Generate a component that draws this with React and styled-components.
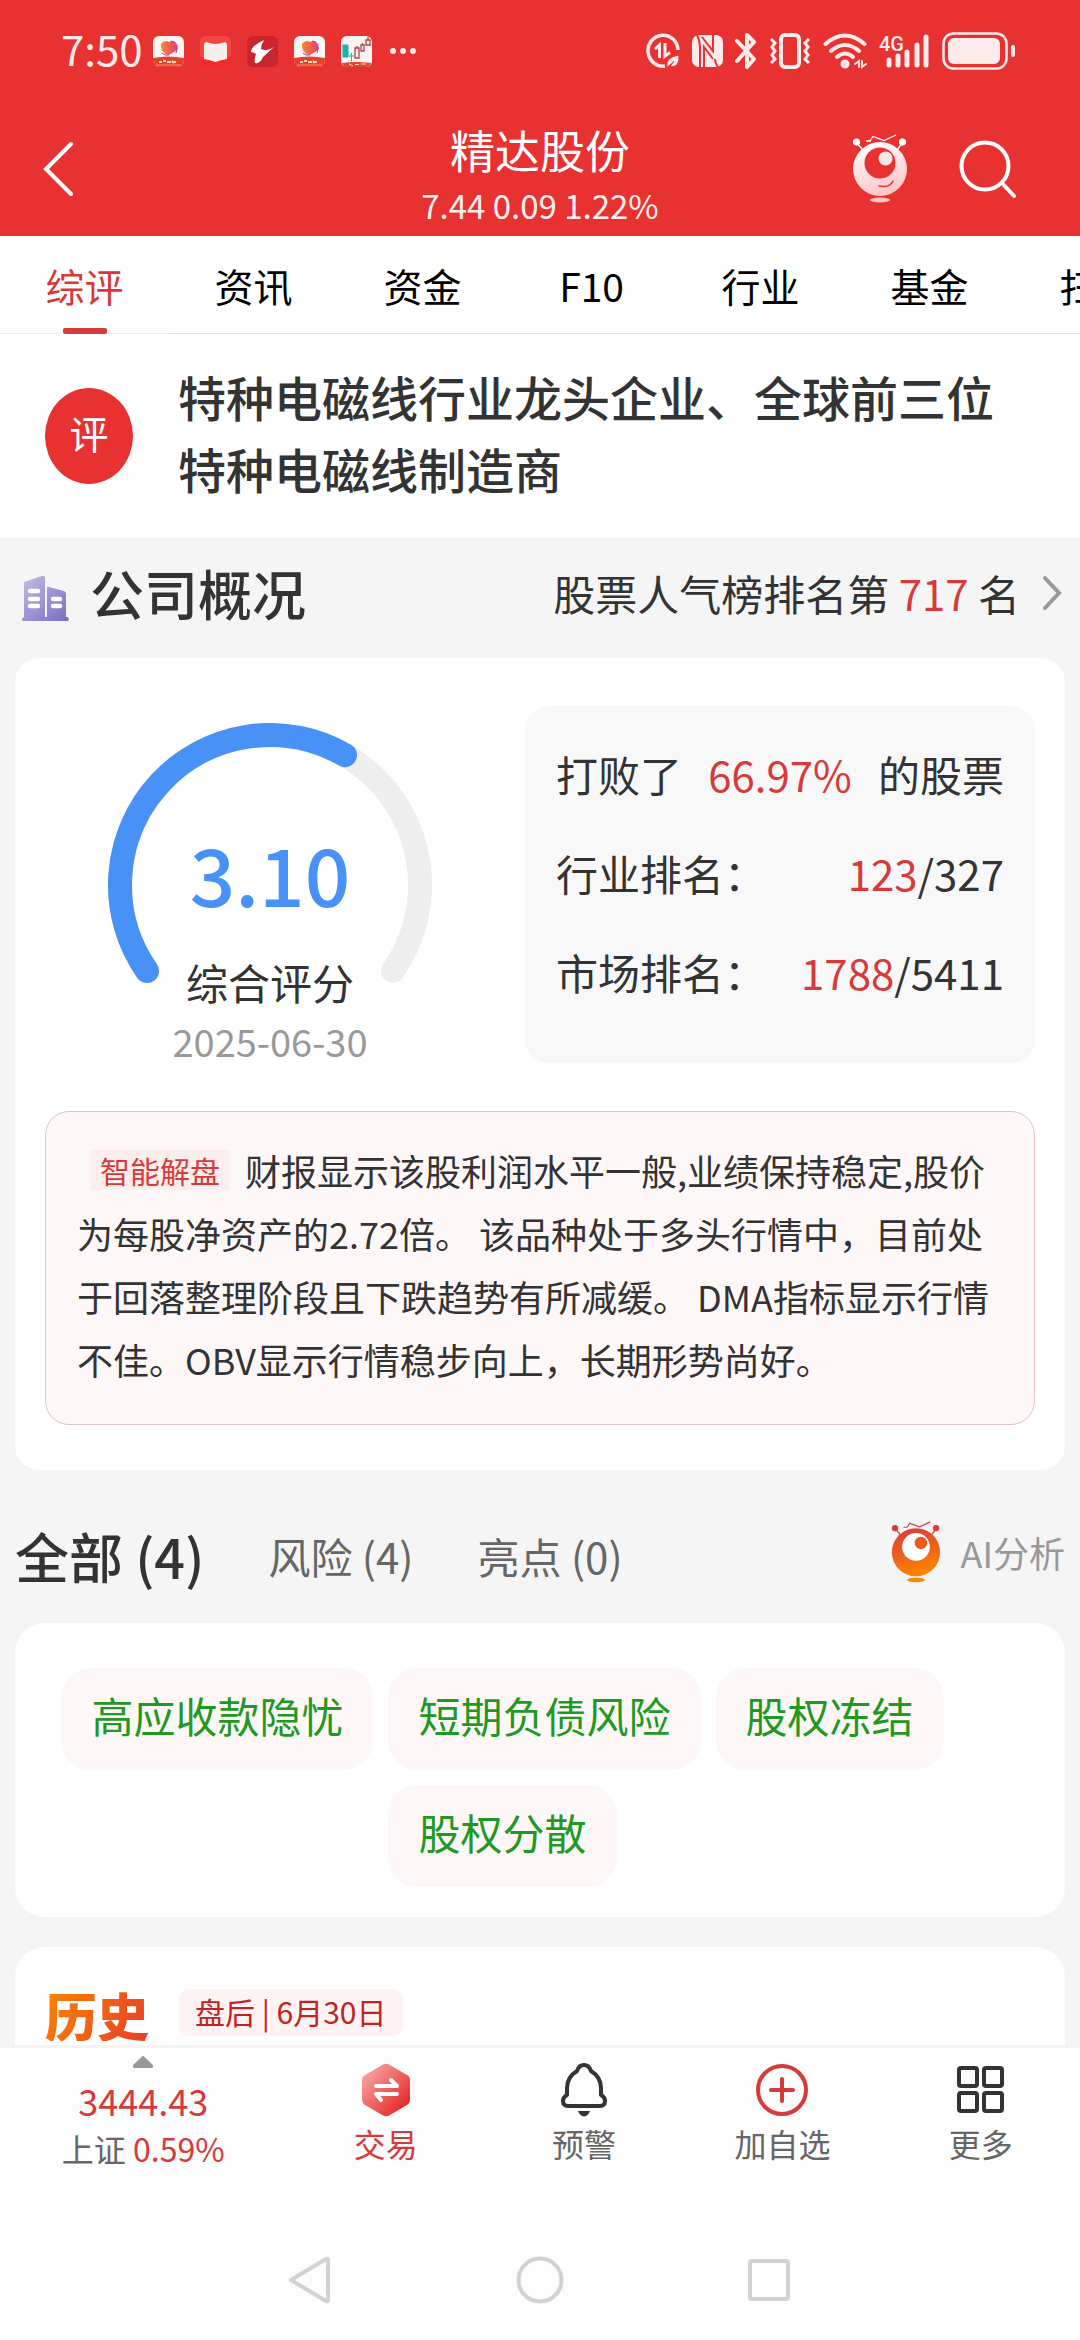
import styled, { createGlobalStyle } from "styled-components";

const RED = "#e83131";

const GlobalStyle = createGlobalStyle`
    *{
        box-sizing: border-box;
    }
    body{
        margin: 0;
        background: #fdfdfd;
        color: #333;
        font-family: "Noto Sans CJK SC", "Noto Sans", sans-serif;
    }
    button{
        border: 0;
        padding: 0;
        background: none;
        color: inherit;
        font: inherit;
        cursor: pointer;
    }
    a{
        color: inherit;
        text-decoration: none;
    }
    h1, h2, p, dl, dt, dd{
        margin: 0;
        font-weight: 400;
    }
    svg{
        display: block;
        flex: none;
    }
`

const Screen = styled.div`
    display: flex;
    flex-direction: column;
    height: 100vh;
`

const Header = styled.header`
    flex: none;
    background: ${RED};
    color: #fff;
`

const StatusBar = styled.div`
    display: flex;
    align-items: center;
    justify-content: space-between;
    height: 102px;
    padding: 0 65px 0 61px;
`

const StatusGroup = styled.div`
    display: flex;
    align-items: center;
    gap: ${(props) => props.$gap}px;
`

const Clock = styled.span`
    margin-right: -6px;
    padding-bottom: 6px;
    font-size: 42px;
    line-height: 60px;
    color: #fdeaea;
`

const TitleBar = styled.div`
    display: grid;
    grid-template-columns: 1fr auto 1fr;
    align-items: center;
    padding: 0 43px;
`

const Titles = styled.div`
    padding: 17px 0 7px;
    text-align: center;
`

const StockName = styled.h1`
    font-size: 45px;
    line-height: 62px;
`

const StockQuote = styled.p`
    font-size: 33px;
    line-height: 48px;
    color: #fff0f0;
`

const TitleActions = styled.div`
    display: flex;
    justify-content: flex-end;
    align-items: center;
    gap: 51px;
    padding-right: 20px;
`

const Tabs = styled.nav`
    display: flex;
    flex: none;
    overflow: hidden;
    background: #fff;
`

const Tab = styled.a`
    position: relative;
    flex: 0 0 15.65%;
    height: 98px;
    border-bottom: 1px solid ${(props) => (props.$active ? "#eee" : "#ddd")};
    font-size: 39px;
    line-height: 98px;
    text-align: center;
    color: ${(props) => (props.$active ? "#d63a3a" : "#000")};

    &::after{
        content: "";
        display: ${(props) => (props.$active ? "block" : "none")};
        position: absolute;
        left: 50%;
        bottom: -1px;
        width: 44px;
        height: 6px;
        margin-left: -22px;
        border-radius: 2px;
        background: #d63a3a;
    }
`

const Content = styled.main`
    flex: 1;
    min-height: 0;
    overflow-y: auto;
    scrollbar-width: none;
    background: #f5f5f5;
`

const Intro = styled.section`
    display: flex;
    align-items: center;
    gap: 45px;
    padding: 0 45px;
    background: #fff;
`

const IntroBadge = styled.span`
    flex: none;
    width: 88px;
    height: 96px;
    border-radius: 50%;
    background: ${RED};
    color: #fff;
    font-size: 39px;
    line-height: 88px;
    text-align: center;
`

const IntroText = styled.p`
    padding: 26px 0 34px;
    font-size: 48px;
    font-weight: 500;
    line-height: 72px;
`

const SectionHead = styled.div`
    display: flex;
    align-items: center;
    padding: 21px 18px 31px 21px;
`

const SectionTitle = styled.h2`
    flex: 1;
    margin-left: 19px;
    font-size: 54px;
    font-weight: 500;
    line-height: 68px;
`

const RankLink = styled.a`
    display: flex;
    align-items: center;
    gap: 22px;
    font-size: 42px;
    line-height: 68px;
`

const Up = styled.span`
    color: #d63a3a;
`

const Card = styled.section`
    margin: 0 15px 30px;
    border-radius: ${(props) => props.$radius || 30}px;
    background: #fff;
`

const OverviewCard = styled(Card)`
    padding: 48px 30px 45px 0;
    margin-bottom: 0;
`

const Overview = styled.div`
    display: grid;
    grid-template-columns: 1fr 1fr;
`

const Gauge = styled.div`
    display: grid;
    justify-items: center;
    align-items: start;
    padding-top: 17px;

    > *{
        grid-area: 1 / 1;
    }
`

const ScoreText = styled.div`
    padding-top: 102px;
    text-align: center;
`

const Score = styled.p`
    font-size: 80px;
    font-weight: 500;
    line-height: 94px;
    color: #4891f6;
`

const ScoreLabel = styled.p`
    margin-top: 33px;
    font-size: 42px;
    line-height: 60px;
`

const ScoreDate = styled.p`
    margin-top: 7px;
    font-size: 38px;
    line-height: 44px;
    color: #999;
`

const RankPanel = styled.dl`
    padding: 18px 31px 42px;
    border-radius: 24px;
    background: #f8f8f8;
    font-size: 42px;
    line-height: 99px;
`

const RankRow = styled.div`
    display: flex;
    justify-content: space-between;
`

const Analysis = styled.p`
    margin: 48px 0 0 30px;
    padding: 27px 31px 33px;
    border: 1px solid #e3c3c3;
    border-radius: 24px;
    background: #fdf7f7;
    font-size: 36px;
    line-height: 63px;
`

const AnalysisTag = styled.span`
    display: inline-block;
    margin: 0 16px 0 14px;
    padding: 0 9px;
    background: #fdeeee;
    color: #d63a3a;
    font-size: 30px;
    line-height: 40px;
    vertical-align: 3px;
`

const FilterBar = styled.div`
    display: flex;
    align-items: center;
    gap: 64px;
    padding: 48px 15px 29px;
`

const Filter = styled.button`
    font-size: ${(props) => (props.$active ? 54 : 42)}px;
    font-weight: ${(props) => (props.$active ? 500 : 400)};
    line-height: 76px;
    color: ${(props) => (props.$active ? "#333" : "#666")};
`

const AiLink = styled.a`
    display: flex;
    align-items: center;
    gap: 20px;
    margin-left: auto;
    padding-bottom: 8px;
    font-size: 36px;
    line-height: 60px;
    color: #999;
`

const TagCard = styled(Card)`
    display: flex;
    flex-wrap: wrap;
    justify-content: center;
    gap: 15px;
    padding: 45px 75px 30px 0;
`

const RiskTag = styled.button`
    padding: 0 30px 8px;
    border-radius: 30px;
    background: #fdf7f7;
    color: #1f991f;
    font-size: 42px;
    line-height: 94px;
`

const HistoryCard = styled(Card)`
    display: flex;
    align-items: flex-start;
    gap: 30px;
    padding: 42px 30px 60px;
`

const HistoryTitle = styled.h2`
    background: linear-gradient(120deg, #fb8503, #e73c28);
    background-clip: text;
    color: transparent;
    font-size: 52px;
    font-weight: 900;
    line-height: 52px;
`

const HistoryTag = styled.span`
    padding: 0 16px 3px;
    border-radius: 10px;
    background: #fff3f3;
    color: #c32222;
    font-size: 30px;
    line-height: 44px;
`

const BottomBar = styled.footer`
    display: grid;
    grid-template-columns: 13fr 9fr 9fr 9fr 9fr;
    flex: none;
    border-top: 3px solid #f4f4f4;
    padding: 8px 0 84px;
    background: #fdfdfd;
`

const IndexQuote = styled.button`
    display: flex;
    flex-direction: column;
    align-items: center;
    font-size: 32px;
    line-height: 48px;
    color: #666;
`

const IndexValue = styled.span`
    margin-top: 8px;
    font-size: 36px;
    color: #d63a3a;
`

const Action = styled.button`
    display: flex;
    flex-direction: column;
    align-items: center;
    padding-top: 7px;
    gap: 2px;
    font-size: 32px;
    line-height: 48px;
    color: ${(props) => (props.$active ? "#d63a3a" : "#666")};
`

const SystemNav = styled.nav`
    display: flex;
    flex: none;
    justify-content: center;
    gap: 181px;
    padding: 0 0 36px;
    background: #fdfdfd;
`

const tabs = ["综评", "资讯", "资金", "F10", "行业", "基金", "扫雷"];
const tags = ["高应收款隐忧", "短期负债风险", "股权冻结", "股权分散"];
const filters = ["全部 (4)", "风险 (4)", "亮点 (0)"];
const actions = [
    { label: "交易", Icon: TradeIcon },
    { label: "预警", Icon: BellIcon },
    { label: "加自选", Icon: AddIcon },
    { label: "更多", Icon: GridIcon },
];

export default function App(){
    return (
        <Screen>
            <GlobalStyle />
            <Header>
                <PhoneStatus />
                <TitleBar>
                    <button aria-label="返回">
                        <svg width="32" height="56" viewBox="0 0 32 56" fill="none" stroke="#fff" strokeWidth="4" strokeLinecap="round">
                            <path d="M28 3L3 28L28 53" />
                        </svg>
                    </button>
                    <Titles>
                        <StockName>精达股份</StockName>
                        <StockQuote>7.44 0.09 1.22%</StockQuote>
                    </Titles>
                    <TitleActions>
                        <button aria-label="AI">
                            <Robot id="robotWhite" size={56} from="#fff" to="#ffc4c6" eye={RED} pupil="#ffe6e6" smile />
                        </button>
                        <button aria-label="搜索">
                            <svg width="58" height="60" viewBox="0 0 58 60" fill="none" stroke="#fff" strokeWidth="4" strokeLinecap="round">
                                <circle cx="26" cy="27" r="23.5" />
                                <path d="M43 44L55 57" />
                            </svg>
                        </button>
                    </TitleActions>
                </TitleBar>
            </Header>
            <Tabs>
                {tabs.map((item, index) => (
                    <Tab key={item} href="#" $active={index === 0}>{item}</Tab>
                ))}
            </Tabs>
            <Content>
                <Intro>
                    <IntroBadge>评</IntroBadge>
                    <IntroText>特种电磁线行业龙头企业、全球前三位特种电磁线制造商</IntroText>
                </Intro>
                <SectionHead>
                    <BuildingIcon />
                    <SectionTitle>公司概况</SectionTitle>
                    <RankLink href="#">
                        <span>股票人气榜排名第 <Up>717</Up> 名</span>
                        <svg width="20" height="36" viewBox="0 0 20 36" fill="none" stroke="#999" strokeWidth="4" strokeLinecap="round">
                            <path d="M3 3L17 18L3 33" />
                        </svg>
                    </RankLink>
                </SectionHead>
                <OverviewCard $radius={24}>
                    <Overview>
                        <ScoreGauge score={3.1} max={5} date="2025-06-30" />
                        <RankPanel>
                            <RankRow><dt>打败了</dt><dd><Up>66.97%</Up></dd><dd>的股票</dd></RankRow>
                            <RankRow><dt>行业排名：</dt><dd><Up>123</Up>/327</dd></RankRow>
                            <RankRow><dt>市场排名：</dt><dd><Up>1788</Up>/5411</dd></RankRow>
                        </RankPanel>
                    </Overview>
                    <Analysis>
                        <AnalysisTag>智能解盘</AnalysisTag>
                        财报显示该股利润水平一般,业绩保持稳定,股价为每股净资产的2.72倍。 该品种处于多头行情中，目前处于回落整理阶段且下跌趋势有所减缓。 DMA指标显示行情不佳。OBV显示行情稳步向上，长期形势尚好。
                    </Analysis>
                </OverviewCard>
                <FilterBar>
                    {filters.map((item, index) => (
                        <Filter key={item} $active={index === 0}>{item}</Filter>
                    ))}
                    <AiLink href="#">
                        <Robot id="robotOrange" size={50} from="#dc3a3c" to="#ff8500" eye="#fff" pupil="#ef5a1c" />
                        AI分析
                    </AiLink>
                </FilterBar>
                <TagCard>
                    {tags.map((item) => (
                        <RiskTag key={item}>{item}</RiskTag>
                    ))}
                </TagCard>
                <HistoryCard>
                    <HistoryTitle>历史</HistoryTitle>
                    <HistoryTag>盘后 | 6月30日</HistoryTag>
                </HistoryCard>
            </Content>
            <BottomBar>
                <IndexQuote>
                    <svg width="20" height="12" viewBox="0 0 20 12" fill="#999" stroke="#999" strokeWidth="2" strokeLinejoin="round">
                        <path d="M10 1L19 9.5V11H1V9.5Z" />
                    </svg>
                    <IndexValue>3444.43</IndexValue>
                    <span>上证 <Up>0.59%</Up></span>
                </IndexQuote>
                {actions.map(({ label, Icon }, index) => (
                    <Action key={label} $active={index === 0}>
                        <Icon />
                        {label}
                    </Action>
                ))}
            </BottomBar>
            <SystemKeys />
        </Screen>
    )
}

// 250 degree dial, opening at the bottom
function ScoreGauge({ score, max, date }){
    const point = (deg) => {
        const a = (deg * Math.PI) / 180;
        return `${162 + 150 * Math.cos(a)} ${162 - 150 * Math.sin(a)}`;
    }
    const end = 215 - (score / max) * 250;
    return (
        <Gauge>
            <svg width="324" height="262" viewBox="0 0 324 262" fill="none" strokeWidth="24" strokeLinecap="round">
                <path d={`M${point(215)}A150 150 0 1 1 ${point(-35)}`} stroke="#eee" />
                <path d={`M${point(215)}A150 150 0 0 1 ${point(end)}`} stroke="#4891f6" />
            </svg>
            <ScoreText>
                <Score>{score.toFixed(2)}</Score>
                <ScoreLabel>综合评分</ScoreLabel>
                <ScoreDate>{date}</ScoreDate>
            </ScoreText>
        </Gauge>
    )
}

function PhoneStatus(){
    return (
        <StatusBar>
            <StatusGroup $gap={16}>
                <Clock>7:50</Clock>
                <FlowerApp id="flowerA" />
                <svg width="31" height="31" viewBox="0 0 31 31">
                    <rect width="31" height="31" rx="6" fill="#f94444" />
                    <path d="M0 21H31V25Q31 31 25 31H6Q0 31 0 25Z" fill="#f22a2c" />
                    <path d="M4 8L6 6Q12 8 15.500 8Q19 8 25 6L27 8V23Q21 24 15.500 26Q10 24 4 23Z" fill="#f5eeea" />
                </svg>
                <svg width="31" height="31" viewBox="0 0 31 31">
                    <rect width="31" height="31" rx="6" fill="#c92430" />
                    <path d="M17 4Q4 10 4 16Q8 17 9 18Q7 23 8 27Q13 28 16 21L27 11Q20 16 14 13Q14 9 17 4Z" fill="#fff" />
                </svg>
                <FlowerApp id="flowerB" />
                <svg width="31" height="31" viewBox="0 0 31 31">
                    <rect width="31" height="31" rx="6" fill="#f7f4f2" />
                    <path d="M2 9H7V21H2ZM8 20H13M10.500 17V25" fill="#12b5b0" stroke="#12b5b0" />
                    <path d="M14 12H18V22H14ZM20 9H23V15H20ZM25 4H29V9H25ZM16 10V12M21.500 7V9M27 1V4" fill="none" stroke="#b04048" strokeWidth="1.300" />
                    <path d="M1 27Q15 25 30 27Q29 31 25 31H6Q2 31 1 27Z" fill="#e2452e" />
                    <path d="M8 28L12 30M14 28.500H18M20 28H25" stroke="#ffe0c0" />
                </svg>
                <svg width="30" height="8" viewBox="0 0 30 8" fill="#fdeaea">
                    <circle cx="5" cy="4" r="3" />
                    <circle cx="15" cy="4" r="3" />
                    <circle cx="25" cy="4" r="3" />
                </svg>
            </StatusGroup>
            <StatusGroup $gap={12}>
                <svg width="34" height="36" viewBox="0 0 34 36" fill="none" stroke="#fdeaea" strokeWidth="3.500">
                    <path d="M32 17A15 15.500 0 1 0 19 33" />
                    <path d="M9 16L13.500 12V25M19 10V23L24 19.500" strokeWidth="3" />
                    <path d="M21 34Q19 24 33 22Q34 35 24 33.500L28 28" fill="#fdeaea" stroke={RED} strokeWidth="1" />
                </svg>
                <svg width="31" height="32" viewBox="0 0 31 32">
                    <rect width="31" height="32" rx="7" fill="#fdeaea" />
                    <path d="M5 0Q8 6 8 12V32M12 32V12L21 24M10 2L21 16V0M23 24Q23 29 26 32" fill="none" stroke={RED} strokeWidth="2" />
                </svg>
                <svg width="22" height="36" viewBox="0 0 22 36" fill="none" stroke="#fdeaea" strokeWidth="4" strokeLinejoin="round" strokeLinecap="round">
                    <path d="M2 8L19 26L12 34V2L19 9L2 28" />
                </svg>
                <svg width="42" height="36" viewBox="0 0 42 36" fill="none" stroke="#fdeaea" strokeWidth="4">
                    <rect x="12" y="2" width="18" height="32" rx="4" />
                    <path d="M2 6L6 10L3 14L6 18L3 22L6 26L2 30M40 6L36 10L39 14L36 18L39 22L36 26L40 30" strokeWidth="3" />
                </svg>
                <svg width="44" height="36" viewBox="0 0 44 36" fill="none" stroke="#fdeaea" strokeWidth="4" strokeLinecap="round">
                    <path d="M2.500 11Q22 -6 41.500 11M8 18Q22 6 36 18M14 24Q22 17 30 24" />
                    <circle cx="22" cy="31" r="2.500" />
                    <path d="M32 31L36 28V34M39 28V34L43 31" strokeWidth="2" />
                </svg>
                <svg width="51" height="36" viewBox="0 0 51 36" fill="none" stroke="#fdeaea" strokeWidth="5" strokeLinecap="round">
                    <text x="0" y="18" fill="#fdeaea" stroke="none" fontFamily="Roboto, sans-serif" fontSize="20" fontWeight="500">4G</text>
                    <path d="M10 27V32M19 23V32M28 19V32M38 12V32M47 4V32" />
                </svg>
                <svg width="73" height="38" viewBox="0 0 73 38">
                    <rect x="1.500" y="1.500" width="63" height="35" rx="10" fill="none" stroke="#fdeaea" strokeWidth="2.500" />
                    <rect x="6" y="6" width="52" height="26" rx="6" fill="#fdeaea" />
                    <rect x="69" y="13" width="4" height="12" rx="2" fill="#fdeaea" />
                </svg>
            </StatusGroup>
        </StatusBar>
    )
}

function FlowerApp({ id }){
    return (
        <svg width="31" height="31" viewBox="0 0 31 31">
            <defs>
                <linearGradient id={id} x1="0" x2="1">
                    <stop offset="0" stopColor="#f78a2a" />
                    <stop offset="1" stopColor="#e0407c" />
                </linearGradient>
            </defs>
            <rect width="31" height="31" rx="6" fill="#fbf6f4" />
            <path d="M8 8Q12 3 16 6Q21 3 23 8Q26 13 21 16L16 19Q7 17 8 8Z" fill={`url(#${id})`} />
            <path d="M18 5Q27 6 23 17M9 17Q12 20 16 19" fill="none" stroke="#a03a9a" />
            <path d="M0 22Q15 19 31 22V25Q31 31 25 31H6Q0 31 0 25Z" fill="#e8402e" />
            <path d="M6 26H9M10 25H13M14 26H18M19 25L21 27M22 25V27" stroke="#ffe3b8" strokeWidth="2" />
            <path d="M3 29H28" stroke="#f7925e" />
        </svg>
    )
}

function Robot({ id, size, from, to, eye, pupil, smile }){
    return (
        <svg width={size} height={size * 1.25} viewBox="0 0 56 70">
            <defs>
                <linearGradient id={id} x1="0.2" y1="0" x2="0.5" y2="1">
                    <stop offset="0" stopColor={from} />
                    <stop offset="1" stopColor={to} />
                </linearGradient>
            </defs>
            <g fill={from} stroke={from}>
                <path d="M4 8L11 16M51 8L45 16" strokeWidth="1.500" />
                <circle cx="4.500" cy="8" r="3.200" />
                <circle cx="50.500" cy="8" r="3.200" />
                <path d="M14 7H18L21 2.500L32 6.500L44 1" fill="none" strokeWidth="1.300" />
            </g>
            <circle cx="28" cy="35" r="27" fill={`url(#${id})`} />
            <circle cx="28" cy="29" r="15.500" fill={eye} />
            <circle cx="33.500" cy="24.500" r="7" fill={pupil} />
            {smile && <path d="M27 52Q38 54 41 47" fill="none" stroke={eye} strokeWidth="1.500" strokeLinecap="round" />}
            <ellipse cx="28" cy="66" rx="10" ry="2.500" fill={to} />
        </svg>
    )
}

function BuildingIcon(){
    return (
        <svg width="50" height="60" viewBox="0 0 50 60">
            <defs>
                <linearGradient id="building" x1="0" y1="0" x2="1" y2="1">
                    <stop offset="0" stopColor="#c3bfe4" />
                    <stop offset="1" stopColor="#776bc6" />
                </linearGradient>
            </defs>
            <path d="M3 19L21 13Q24 12 24 15V54H26V25Q26 23 28 24L43 28Q45 29 45 31V54H47Q49 58 46 58H2Q-1 56 3 54Z" fill="url(#building)" />
            <path d="M9 28H17M9 36H17M9 43H17M32 36H39M32 43H39" stroke="#fff" strokeWidth="4.500" strokeLinecap="round" />
        </svg>
    )
}

function TradeIcon(){
    return (
        <svg width="54" height="54" viewBox="0 0 54 54">
            <defs>
                <linearGradient id="trade" x1="0.1" y1="0.1" x2="0.85" y2="0.85">
                    <stop offset="0" stopColor="#f7a5a3" />
                    <stop offset="1" stopColor="#e62c2c" />
                </linearGradient>
            </defs>
            <path d="M24 1.500Q27 0 30 1.500L48 12Q51 13.500 51 17V37Q51 40 48 42L30 52.500Q27 54 24 52.500L6 42Q3 40 3 37V17Q3 13.500 6 12Z" fill="url(#trade)" />
            <path d="M17 23H38L32 17M38 31H17L22 37" fill="none" stroke="#fff" strokeWidth="4" strokeLinecap="round" strokeLinejoin="round" />
        </svg>
    )
}

function BellIcon(){
    return (
        <svg width="54" height="54" viewBox="0 0 54 54" fill="none" stroke="#333" strokeWidth="4" strokeLinejoin="round">
            <path d="M20 8Q22 2 27 2Q32 2 34 8Q44 14 44 25V32Q48 34 48 38Q48 43 43 43H11Q6 43 6 38Q6 34 10 32V25Q10 14 20 8Z" />
            <path d="M21 48H33Q31 53 27 53.500Q23 53 21 48Z" fill="#333" stroke="none" />
        </svg>
    )
}

function AddIcon(){
    return (
        <svg width="54" height="54" viewBox="0 0 54 54" fill="none" stroke="#d63a3a" strokeWidth="4" strokeLinecap="round">
            <circle cx="27" cy="27" r="24" />
            <path d="M16 27H38M27 16V38" />
        </svg>
    )
}

function GridIcon(){
    return (
        <svg width="54" height="54" viewBox="0 0 54 54" fill="none" stroke="#333" strokeWidth="4">
            <rect x="5" y="5" width="18" height="18" rx="2" />
            <rect x="30" y="5" width="18" height="18" rx="2" />
            <rect x="5" y="30" width="18" height="18" rx="2" />
            <rect x="30" y="30" width="18" height="18" rx="2" />
        </svg>
    )
}

function SystemKeys(){
    return (
        <SystemNav>
            <button aria-label="后退">
                <svg width="48" height="48" viewBox="0 0 48 48" fill="none" stroke="#d2d2d2" strokeWidth="4" strokeLinejoin="round">
                    <path d="M4 24L39 3Q41 2 41 4V44Q41 46 39 45Z" />
                </svg>
            </button>
            <button aria-label="主屏幕">
                <svg width="48" height="48" viewBox="0 0 48 48" fill="none" stroke="#d2d2d2" strokeWidth="4">
                    <circle cx="24" cy="24" r="21.500" />
                </svg>
            </button>
            <button aria-label="最近任务">
                <svg width="48" height="48" viewBox="0 0 48 48" fill="none" stroke="#d2d2d2" strokeWidth="4">
                    <rect x="5" y="5" width="38" height="38" rx="2" />
                </svg>
            </button>
        </SystemNav>
    )
}
